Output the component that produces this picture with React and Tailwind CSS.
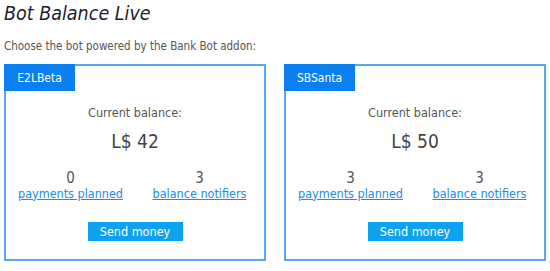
import React from 'react';

const bots = [
    { name: 'E2LBeta', balance: 42, payments: 0, notifiers: 3 },
    { name: 'SBSanta', balance: 50, payments: 3, notifiers: 3 },
];

/**
 * Satu kartu bot: tab nama, saldo, dua angka dan tombol kirim
 */
function BotCard({ bot }) {
    return (
        <div className="w-[262px] h-[197px] border-2 border-[#5aa8f2] flex flex-col">
            <div className="flex">
                <div className="-ml-[2px] -mt-[2px] w-[71px] h-[27px] bg-[#0a80f0] text-white text-[12px] flex items-center justify-center">
                    {bot.name}
                </div>
            </div>
            <div className="mt-[13px] text-center text-[12.5px] text-[#555]">Current balance:</div>
            <div className="mt-[6px] text-center text-[19px] text-[#444] leading-[24px]">L$ {bot.balance}</div>
            <div className="mt-[17px] grid grid-cols-2 text-[12.5px]">
                <div className="flex flex-col items-center">
                    <span className="text-[15px] leading-[16px] text-[#555]">{bot.payments}</span>
                    <a href="#" className="text-[#1a8cf0] underline leading-[15px]">payments planned</a>
                </div>
                <div className="flex flex-col items-center">
                    <span className="text-[15px] leading-[16px] text-[#555]">{bot.notifiers}</span>
                    <a href="#" className="text-[#1a8cf0] underline leading-[15px]">balance notifiers</a>
                </div>
            </div>
            <div className="mt-[21px] flex justify-center">
                <button type="button" className="w-[95px] h-[19px] bg-[#0ea2ee] text-white text-[12.5px] leading-[19px]">
                    Send money
                </button>
            </div>
        </div>
    );
}

export default function App() {
    return (
        <div className="w-[550px] h-[271px] bg-white px-[4px] pt-[1px] text-[#555]" style={{ fontFamily: '"DejaVu Sans Condensed", "DejaVu Sans", sans-serif' }}>
            <h1 className="text-[19.5px] italic text-[#1e1e2a] leading-[26px]">Bot Balance Live</h1>
            <p className="mt-[12px] text-[11.5px] leading-[14px]">Choose the bot powered by the Bank Bot addon:</p>
            <div className="mt-[11px] flex gap-[18px]">
                {bots.map((b) => (
                    <BotCard key={b.name} bot={b} />
                ))}
            </div>
        </div>
    );
}
